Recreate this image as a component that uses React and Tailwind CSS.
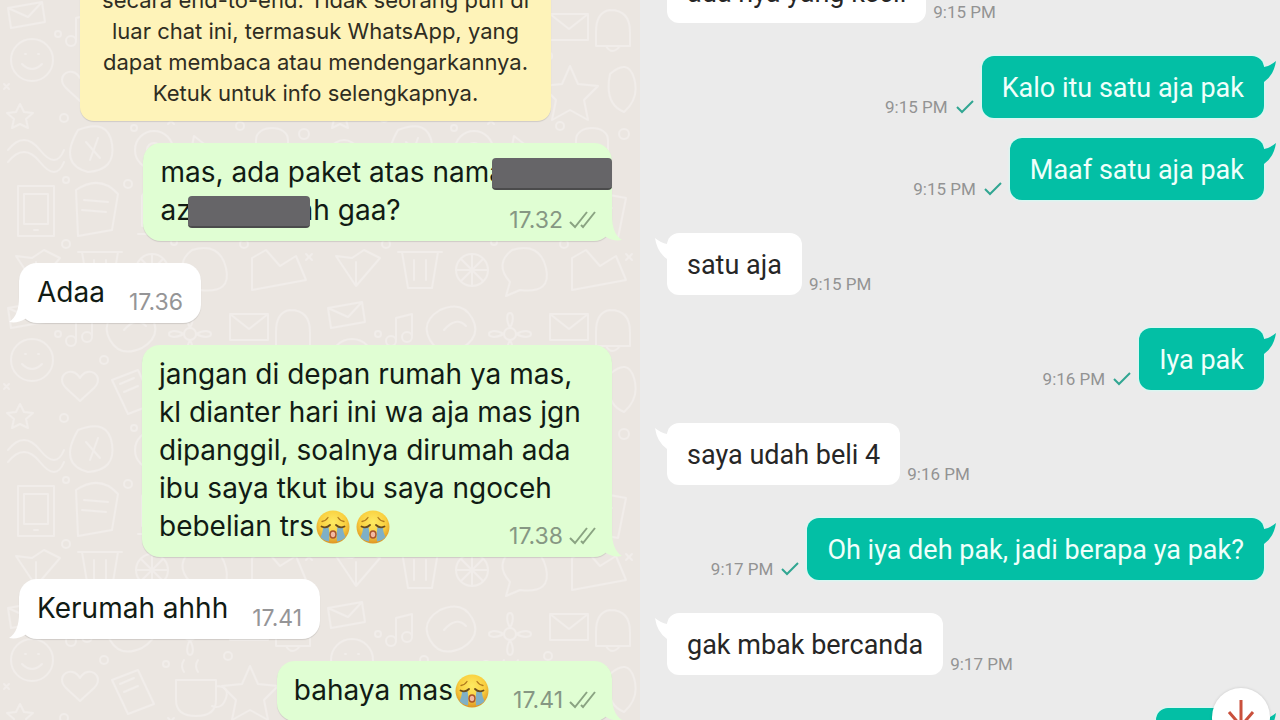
import { Fragment } from 'react';

// Two chat panes side by side: WhatsApp style on the left, marketplace chat on the right.

const waMessages = [
  {
    id: 1,
    mine: true,
    time: '17.32',
    body: (
      <>
        mas, ada paket atas nama
        <Redacted className="w-[120px] -ml-[13px] -mr-4" />
        <br />
        az
        <Redacted className="w-[122px] -ml-1 -mr-3" />
        ah gaa?
      </>
    ),
  },
  { id: 2, mine: false, time: '17.36', body: 'Adaa' },
  {
    id: 3,
    mine: true,
    time: '17.38',
    body: (
      <>
        jangan di depan rumah ya mas, kl dianter hari ini wa aja mas jgn dipanggil, soalnya dirumah
        ada ibu saya tkut ibu saya ngoceh bebelian trs
        <Crying className="ml-0.5" />
        <Crying className="ml-1.5" />
      </>
    ),
  },
  { id: 4, mine: false, time: '17.41', body: 'Kerumah ahhh' },
  {
    id: 5,
    mine: true,
    time: '17.41',
    body: (
      <>
        bahaya mas
        <Crying className="ml-0.5" />
      </>
    ),
  },
];

const shopMessages = [
  { id: 1, mine: false, time: '9:15 PM', text: 'ada nya yang kecil', noTail: true },
  { id: 2, mine: true, time: '9:15 PM', text: 'Kalo itu satu aja pak' },
  { id: 3, mine: true, time: '9:15 PM', text: 'Maaf satu aja pak', grouped: true },
  { id: 4, mine: false, time: '9:15 PM', text: 'satu aja' },
  { id: 5, mine: true, time: '9:16 PM', text: 'Iya pak' },
  { id: 6, mine: false, time: '9:16 PM', text: 'saya udah beli 4' },
  { id: 7, mine: true, time: '9:17 PM', text: 'Oh iya deh pak, jadi berapa ya pak?' },
  { id: 8, mine: false, time: '9:17 PM', text: 'gak mbak bercanda' },
];

function Redacted({ className }) {
  return (
    <span
      className={`relative inline-block h-8 rounded-[4px] bg-[#666568] border-b-2 border-[#4b4b4c] align-middle ${className}`}
    />
  );
}

function Crying({ className = '' }) {
  return (
    <svg
      viewBox="0 0 34 34"
      role="img"
      aria-label="crying face"
      className={`inline-block size-[34px] align-[-8px] ${className}`}
    >
      <defs>
        <radialGradient id="face" cx="50%" cy="35%" r="65%">
          <stop offset="0" stopColor="#fdea62" />
          <stop offset="0.6" stopColor="#f9cf3f" />
          <stop offset="1" stopColor="#dd9423" />
        </radialGradient>
      </defs>
      <circle cx="17" cy="17" r="16.5" fill="url(#face)" />
      <path d="M6 11.500c2.500-.3 4.500-1.700 6-4M28 11.500c-2.500-.3-4.500-1.700-6-4" stroke="#b07a1e" strokeWidth="1.300" fill="none" strokeLinecap="round" />
      <path d="M7 17h5.500c1 4.500 1 9 .5 14.500-3.500-.5-6.500-2-8.500-4.500 1.500-3 2.500-6 2.500-10z" fill="#7fb0c6" />
      <path d="M27 17h-5.500c-1 4.500-1 9-.5 14.500 3.500-.5 6.500-2 8.500-4.500-1.500-3-2.500-6-2.500-10z" fill="#7fb0c6" />
      <path d="M5.500 16.500c3 1.500 6 1 8.500-1.500M28.500 16.500c-3 1.500-6 1-8.500-1.500" stroke="#6b4c1c" strokeWidth="1.800" fill="none" strokeLinecap="round" />
      <ellipse cx="17" cy="24.500" rx="3.600" ry="4.200" fill="#a9532a" />
      <ellipse cx="17" cy="24.500" rx="2.200" ry="2.800" fill="#f3b9a0" />
    </svg>
  );
}

function DoubleCheck() {
  return (
    <svg viewBox="0 0 27 18" className="w-[27px] h-[18px]" fill="none" stroke="#8aa382" strokeWidth="2" aria-hidden="true">
      <path d="M1 11l5 5L18 1M12 14l2 2L26 1" />
    </svg>
  );
}

// Faint line drawings repeated behind the conversation.
function Doodles() {
  return (
    <svg className="absolute inset-0 size-full" aria-hidden="true">
      <defs>
        <pattern id="doodles" width="320" height="300" patternUnits="userSpaceOnUse">
          <g fill="none" stroke="#f1edea" strokeWidth="2" strokeLinecap="round" strokeLinejoin="round">
            <circle cx="32" cy="60" r="21" />
            <path d="M22 64q10 10 20 0M25 54h1M38 54h1" />
            <path d="M8 8l34-6 3 20-34 6zM8 8l20 9 14-15" />
            <path d="M76 18v22M76 18l16-4v22" />
            <circle cx="71" cy="41" r="5" />
            <circle cx="87" cy="37" r="5" />
            <path d="M20 104l4 8 9 1-7 6 2 9-8-4-8 4 2-9-7-6 9-1z" />
            <path d="M80 78c-8-14-26-2-14 10l14 13 14-13c12-12-6-24-14-10z" />
            <path d="M120 10q22-10 32 8t-10 30q-22 10-32-8t10-30zM124 30q12-14 22-4" />
            <path d="M112 80l26-10 16 34-26 10zM120 84l14-6M124 92l14-6" />
            <circle cx="190" cy="34" r="6" />
            <path d="M190 28c-10-20 10-20 0 0M196 34c20-10 20 10 0 0M190 40c10 20-10 20 0 0M184 34c-20 10-20-10 0 0" />
            <path d="M230 14h38v26h-38zM230 14l19 15 19-15" />
            <path d="M290 10q20 0 20 22v14h-34V32q0-20 14-22M286 46q6 10 14 0" />
            <path d="M176 80h40v20q0 16-20 16t-20-16zM216 86q14 0 10 12t-14 8M184 72q-4-6 0-12M198 72q-4-6 0-12" />
            <path d="M250 66l8 18 20 2-14 14 4 20-18-10-18 10 4-20-14-14 20-2z" />
            <path d="M290 74q18-16 24 4t-10 34q-20-8-14-38z" />
            <path d="M8 150q16-20 32 0t24 0M8 162q16-20 32 0t24 0" />
            <path d="M18 186h36v50H18zM24 194h24v30H24zM34 230h4" />
            <path d="M78 130q30-12 34 14t-24 28q-30-8-10-42zM86 142l14 16M98 138l-8 22" />
            <path d="M76 190q24-16 42 4l-6 36-34 6zM84 200l24 2M82 210l24 2" />
            <circle cx="154" cy="150" r="19" />
            <circle cx="154" cy="150" r="7" />
            <path d="M142 196l10-16 10 16v30h-20zM142 206h20M138 234h28" />
            <path d="M194 136l28 22-36 18zM204 146l-4 20M222 158l20-6" />
            <path d="M256 140c0-16 32-16 32 0v22h-32zM256 150h32M264 168v8M280 168v8" />
            <path d="M182 196q18-12 30 6t26 2M182 210q18-12 30 6t26 2M182 224q18-12 30 6t26 2" />
            <path d="M262 190l44 8-8 40-44-8zM270 204l22 4M268 214l22 4" />
            <path d="M16 256l20 30 24-28-16-8-12 8zM36 286V262" />
            <path d="M82 252h36l-6 36H88zM78 252h44M94 260v20M106 260v20" />
            <circle cx="152" cy="270" r="16" />
            <path d="M152 254v32M136 270h32M141 259l22 22M163 259l-22 22" />
            <path d="M192 250q28-8 34 18t-26 22l-14 6 4-14q-16-18 2-32z" />
            <path d="M252 258l14-8 14 16 16-10 10 24-54 10z" />
            <circle cx="58" cy="34" r="3" />
            <circle cx="104" cy="60" r="4" />
            <circle cx="166" cy="64" r="3" />
            <circle cx="228" cy="56" r="4" />
            <circle cx="64" cy="118" r="4" />
            <circle cx="134" cy="128" r="3" />
            <circle cx="240" cy="126" r="4" />
            <circle cx="304" cy="134" r="5" />
            <circle cx="66" cy="180" r="3" />
            <circle cx="128" cy="184" r="4" />
            <circle cx="246" cy="184" r="3" />
            <circle cx="66" cy="244" r="4" />
            <circle cx="174" cy="242" r="3" />
            <circle cx="244" cy="244" r="4" />
            <path d="M4 84l5 5M9 84l-5 5M168 118l6 6M174 118l-6 6M306 254l6 6M312 254l-6 6" />
          </g>
        </pattern>
      </defs>
      <rect width="100%" height="100%" fill="url(#doodles)" />
    </svg>
  );
}

function WaBubble({ mine, time, body }) {
  return (
    <li
      className={
        mine
          ? 'relative self-end max-w-[470px] flow-root rounded-[18px] bg-[#e0fed3] pl-[17px] pr-4 pt-[10px] pb-[9px] shadow-[0_1px_1px_rgba(0,0,0,0.12)]'
          : 'relative self-start max-w-[470px] flow-root rounded-[18px] bg-white px-[18px] pt-[10px] pb-[9px] shadow-[0_1px_1px_rgba(0,0,0,0.12)]'
      }
    >
      <svg
        viewBox="0 0 24 26"
        aria-hidden="true"
        className={
          mine
            ? 'absolute -right-[10px] bottom-0 w-6 h-[26px] fill-[#e0fed3]'
            : 'absolute -left-[10px] bottom-0 w-6 h-[26px] -scale-x-100 fill-white'
        }
      >
        <path d="M14 0c0 12 3 21 10 25-6 1-11 0-16-3L0 14V0z" />
      </svg>
      <span className="relative">{body}</span>
      <span className="relative float-right ml-6 mt-[17px] flex h-6 items-center gap-[6px] text-[23px] leading-6">
        <time className={mine ? 'text-[#869783]' : 'text-[#959597]'}>{time}</time>
        {mine && <DoubleCheck />}
      </span>
    </li>
  );
}

function WhatsAppPane() {
  return (
    <section
      aria-label="WhatsApp chat"
      className="relative w-1/2 overflow-hidden bg-[#ebe6e1] font-[Inter,sans-serif] text-[28px] leading-[38px] text-[#111b14]"
    >
      <Doodles />
      <p className="relative -mt-[27px] ml-20 mr-[89px] rounded-[14px] bg-[#fef3b9] px-4 py-3 text-center text-[22px] leading-[31px] text-[#2f2d22] shadow-[0_1px_1px_rgba(0,0,0,0.12)]">
        secara end-to-end. Tidak seorang pun di luar chat ini, termasuk WhatsApp, yang dapat membaca
        atau mendengarkannya. Ketuk untuk info selengkapnya.
      </p>
      <ul className="relative mt-[22px] ml-[19px] mr-7 flex flex-col gap-[22px]">
        {waMessages.map((m) => (
          <WaBubble key={m.id} {...m} />
        ))}
      </ul>
    </section>
  );
}

function ShopTail({ mine }) {
  return (
    <svg
      viewBox="0 0 16 26"
      aria-hidden="true"
      className={
        mine
          ? 'absolute -right-3 top-1 w-4 h-[26px] fill-[#03bfa5]'
          : 'absolute -left-3 top-1 w-4 h-[26px] -scale-x-100 fill-white'
      }
    >
      <path d="M0 0l4 7q6-1 12-6-2 14-12 21H0z" />
    </svg>
  );
}

function ShopRow({ mine, time, text, grouped, noTail }) {
  const bubble = (
    <div
      className={
        mine
          ? 'relative rounded-xl bg-[#03bfa5] px-5 pt-4 pb-[14px] text-[#f0fffb] shadow-[0_0_2px_1px_#d3fbf4]'
          : 'relative rounded-xl bg-white px-5 pt-4 pb-[14px] text-[#262626]'
      }
    >
      {!noTail && <ShopTail mine={mine} />}
      {text}
    </div>
  );
  const stamp = <time className="text-[17px] leading-[22px] text-[#939393]">{time}</time>;

  return (
    <li className={`flex items-end ${mine ? 'justify-end' : ''} ${grouped ? '-mt-[13px]' : ''}`}>
      {mine ? (
        <Fragment>
          {stamp}
          <svg viewBox="0 0 18 14" className="mx-2 mb-1 w-[18px] h-[14px]" fill="none" stroke="#31a692" strokeWidth="2" aria-hidden="true">
            <path d="M1 7l5 5L17 1" />
          </svg>
          {bubble}
        </Fragment>
      ) : (
        <Fragment>
          {bubble}
          <span className="ml-[7px] flex">{stamp}</span>
        </Fragment>
      )}
    </li>
  );
}

function ShopPane() {
  return (
    <section
      aria-label="Courier chat"
      className="relative w-1/2 overflow-hidden bg-[#ebebeb] font-[Roboto,sans-serif] text-[27px] leading-8"
    >
      <ul className="-mt-[39px] ml-[27px] mr-4 flex flex-col gap-[33px]">
        {shopMessages.map((m) => (
          <ShopRow key={m.id} {...m} />
        ))}
        <li className="relative h-[62px] w-[108px] self-end rounded-xl bg-[#03bfa5] shadow-[0_0_2px_1px_#d3fbf4]">
          <ShopTail mine />
        </li>
      </ul>
      <button
        type="button"
        aria-label="Scroll to latest message"
        className="absolute right-[10px] -bottom-[26px] flex size-[58px] items-center justify-center rounded-full bg-white shadow-[0_0_3px_rgba(0,0,0,0.15)]"
      >
        <svg viewBox="0 0 36 36" className="size-9" fill="none" stroke="#c9503c" strokeWidth="3" aria-hidden="true">
          <path d="M18 1v32M6 13l12 14 12-14" />
        </svg>
      </button>
    </section>
  );
}

export default function App() {
  return (
    <main className="flex h-screen overflow-hidden">
      <WhatsAppPane />
      <ShopPane />
    </main>
  );
}
